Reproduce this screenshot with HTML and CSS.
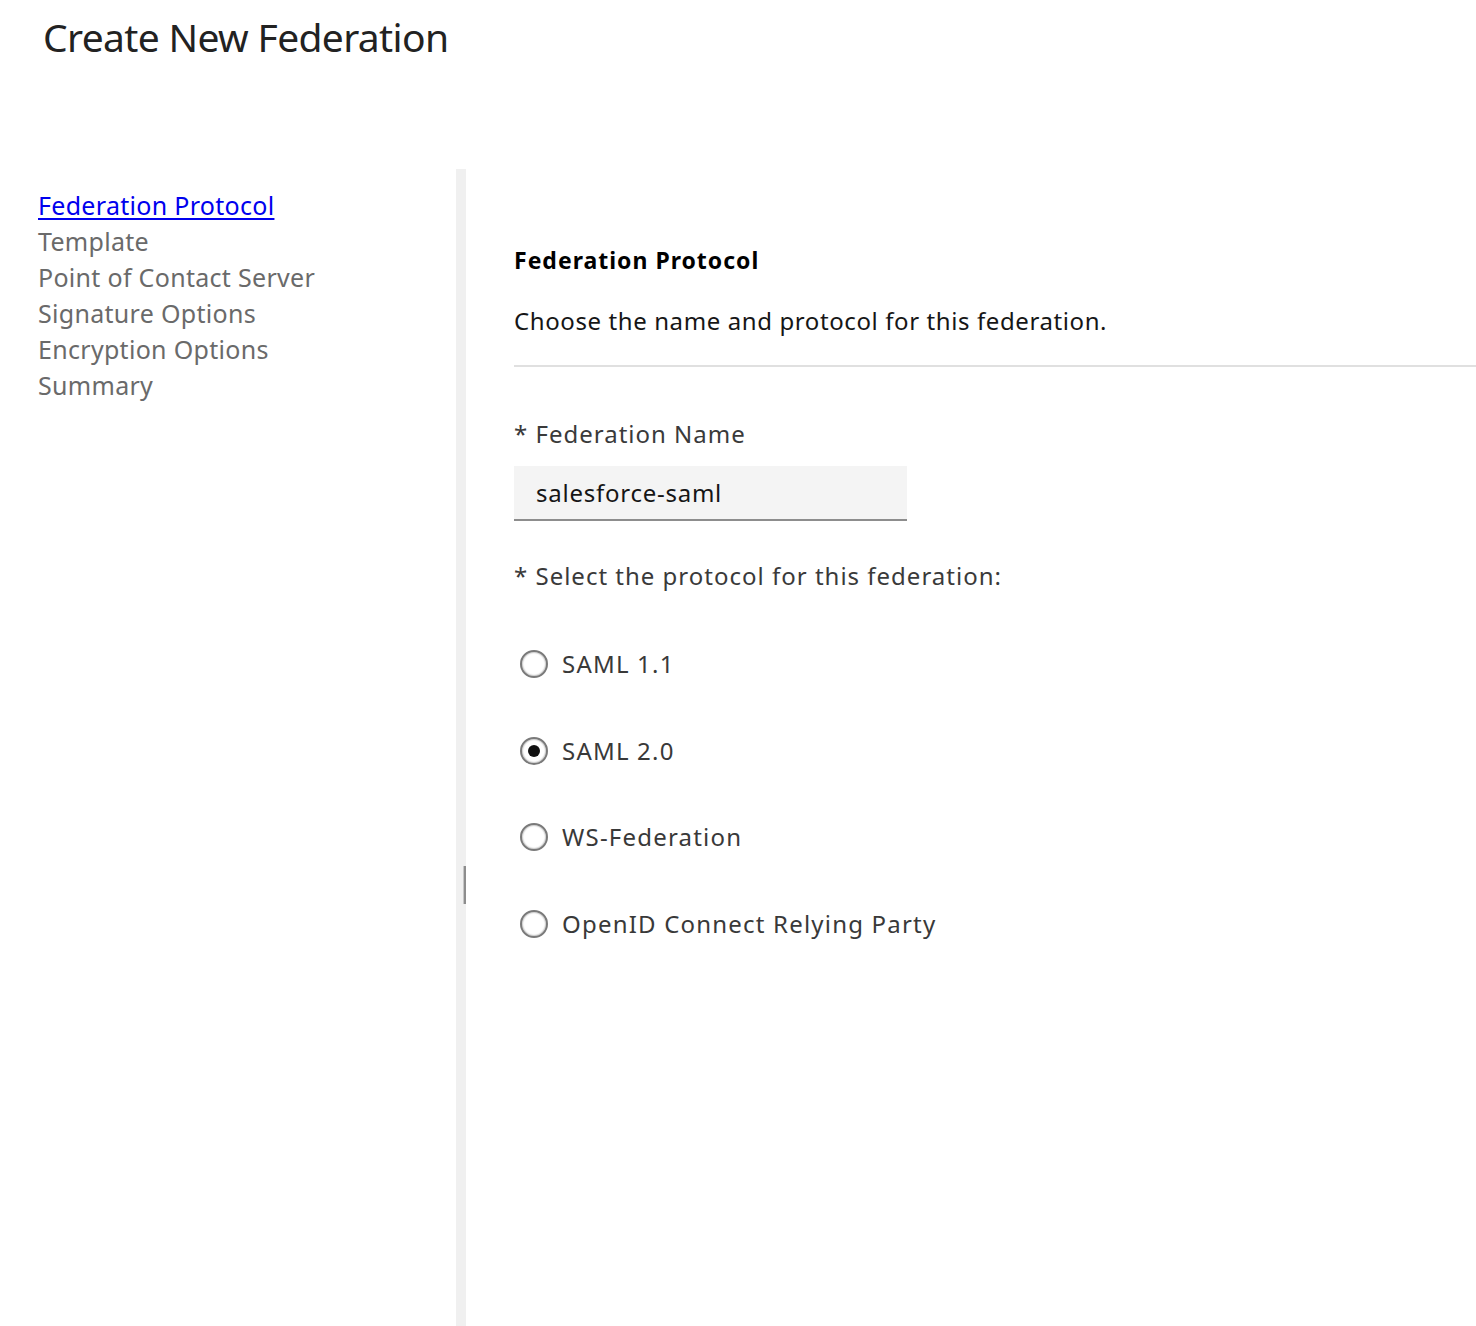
FILE: index.html
```html
<!DOCTYPE html>
<html lang="en">
<head>
<meta charset="utf-8">
<title>Create New Federation</title>
<link rel="stylesheet" href="styles.css">
</head>
<body>
<header class="page-header">
  <h1 class="page-title">Create New Federation</h1>
</header>
<div class="wizard">
  <nav class="steps">
    <a class="step step-active" href="#">Federation Protocol</a>
    <span class="step">Template</span>
    <span class="step">Point of Contact Server</span>
    <span class="step">Signature Options</span>
    <span class="step">Encryption Options</span>
    <span class="step">Summary</span>
  </nav>
  <div class="splitter"><span class="splitter-handle"></span></div>
  <main class="content">
    <h2 class="section-title">Federation Protocol</h2>
    <p class="section-desc">Choose the name and protocol for this federation.</p>
    <hr class="rule">
    <label class="field-label" for="fedname">* Federation Name</label>
    <input class="text-input" id="fedname" type="text" value="salesforce-saml">
    <div class="field-label field-label-proto">* Select the protocol for this federation:</div>
    <div class="radio-group">
      <label class="radio-row"><span class="radio"></span><span class="radio-text">SAML 1.1</span></label>
      <label class="radio-row"><span class="radio radio-checked"></span><span class="radio-text">SAML 2.0</span></label>
      <label class="radio-row"><span class="radio"></span><span class="radio-text">WS-Federation</span></label>
      <label class="radio-row"><span class="radio"></span><span class="radio-text">OpenID Connect Relying Party</span></label>
    </div>
  </main>
</div>
</body>
</html>
```
FILE: styles.css
```css
html, body {
  margin: 0;
  padding: 0;
  background: #ffffff;
}
body {
  font-family: "Noto Sans", "Open Sans", sans-serif;
  color: #161616;
  min-height: 1326px;
  display: flex;
  flex-direction: column;
}
.page-header {
  height: 169px;
  padding-left: 43px;
  box-sizing: border-box;
}
.page-title {
  margin: 0;
  padding-top: 7px;
  font-size: 39px;
  line-height: 60px;
  font-weight: 400;
  letter-spacing: -0.65px;
  color: #222222;
}
.wizard {
  flex: 1;
  display: flex;
}
.steps {
  width: 456px;
  box-sizing: border-box;
  padding: 18px 0 0 38px;
  display: flex;
  flex-direction: column;
  align-items: flex-start;
}
.step {
  font-size: 25px;
  line-height: 36px;
  letter-spacing: 0.3px;
  color: #6a6a6a;
}
.step-active {
  color: #0000ee;
  text-decoration: underline;
  text-underline-offset: 3px;
}
.splitter {
  width: 10px;
  background: #f0f0f0;
  position: relative;
}
.splitter-handle {
  position: absolute;
  left: 7px;
  top: 697px;
  width: 3px;
  height: 38px;
  background: #8d8d8d;
  border-left: 1px solid #c6c6c6;
  box-sizing: border-box;
}
.content {
  flex: 1;
  padding: 0 0 0 48px;
  display: flex;
  flex-direction: column;
  align-items: flex-start;
}
.section-title {
  margin: 75px 0 0;
  font-size: 23px;
  line-height: 32px;
  font-weight: 700;
  letter-spacing: 1px;
  color: #000000;
}
.section-desc {
  margin: 29px 0 0;
  font-size: 24px;
  line-height: 32px;
  letter-spacing: 0.6px;
  color: #161616;
}
.rule {
  align-self: stretch;
  margin: 28px 0 0;
  border: 0;
  height: 2px;
  background: #e0e0e0;
}
.field-label {
  margin-top: 51px;
  font-size: 24px;
  line-height: 32px;
  color: #3a3a3a;
  letter-spacing: 1px;
}
.text-input {
  margin-top: 16px;
  width: 393px;
  height: 55px;
  box-sizing: border-box;
  border: 0;
  border-bottom: 2px solid #8d8d8d;
  background: #f4f4f4;
  padding: 0 22px;
  font-family: inherit;
  font-size: 24px;
  letter-spacing: 0.75px;
  color: #161616;
  outline: none;
}
.field-label-proto {
  margin-top: 39px;
}
.radio-group {
  margin-top: 56px;
  display: flex;
  flex-direction: column;
  gap: 54.7px;
}
.radio-row {
  display: flex;
  align-items: center;
  gap: 14px;
  height: 32px;
  padding-left: 6px;
}
.radio {
  width: 28px;
  height: 28px;
  box-sizing: border-box;
  border-radius: 50%;
  border: 2px solid #7a7a7a;
  background: radial-gradient(circle, #ffffff 55%, #e8e8e8 100%);
  box-shadow: inset 0 0 1px 1px #d0d0d0;
  display: flex;
  align-items: center;
  justify-content: center;
}
.radio-checked::after {
  content: "";
  width: 12px;
  height: 12px;
  border-radius: 50%;
  background: #111111;
}
.radio-text {
  font-size: 24px;
  line-height: 32px;
  color: #393939;
  letter-spacing: 1.2px;
}
```
